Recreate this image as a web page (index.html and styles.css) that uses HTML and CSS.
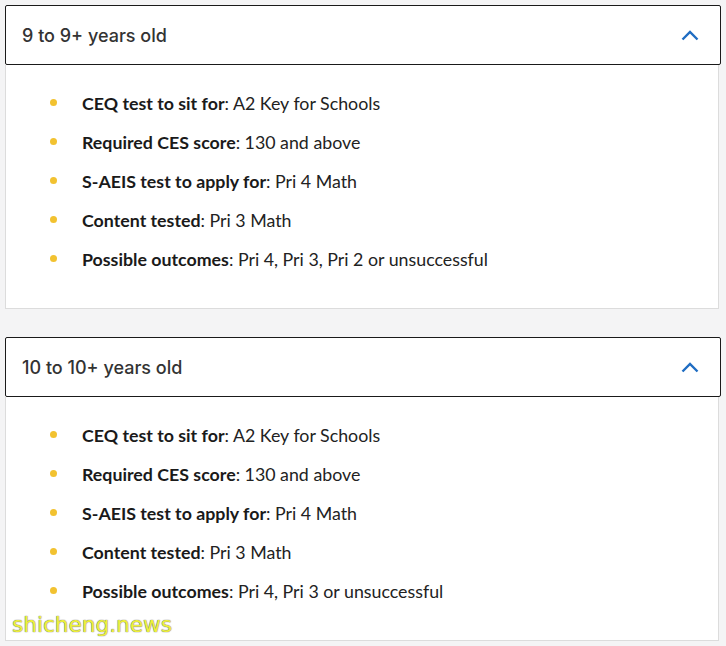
FILE: index.html
```html
<!DOCTYPE html>
<html>
<head>
<meta charset="utf-8">
<link rel="stylesheet" href="styles.css">
</head>
<body>
<div class="page">
  <section class="card">
    <div class="card-head">
      <span class="title">9 to 9+ years old</span>
      <svg class="chev" width="18" height="11" viewBox="0 0 18 11"><path d="M1.5 9.5 L9 2 L16.5 9.5" fill="none" stroke="#1f6dc2" stroke-width="2.4"/></svg>
    </div>
    <ul class="card-body">
      <li><b>CEQ test to sit for</b>: A2 Key for Schools</li>
      <li><b>Required CES score</b>: 130 and above</li>
      <li><b>S-AEIS test to apply for</b>: Pri 4 Math</li>
      <li><b>Content tested</b>: Pri 3 Math</li>
      <li><b>Possible outcomes</b>: Pri 4, Pri 3, Pri 2 or unsuccessful</li>
    </ul>
  </section>
  <section class="card">
    <div class="card-head">
      <span class="title">10 to 10+ years old</span>
      <svg class="chev" width="18" height="11" viewBox="0 0 18 11"><path d="M1.5 9.5 L9 2 L16.5 9.5" fill="none" stroke="#1f6dc2" stroke-width="2.4"/></svg>
    </div>
    <ul class="card-body">
      <li><b>CEQ test to sit for</b>: A2 Key for Schools</li>
      <li><b>Required CES score</b>: 130 and above</li>
      <li><b>S-AEIS test to apply for</b>: Pri 4 Math</li>
      <li><b>Content tested</b>: Pri 3 Math</li>
      <li><b>Possible outcomes</b>: Pri 4, Pri 3 or unsuccessful</li>
    </ul>
  </section>
</div>
<div class="watermark">shicheng.news</div>
</body>
</html>
```
FILE: styles.css
```css
html, body { margin: 0; padding: 0; }
body {
  background: #f4f4f5;
  width: 726px;
  height: 646px;
  overflow: hidden;
  position: relative;
}
.page {
  padding: 5px 5px 0 5px;
  display: flex;
  flex-direction: column;
  gap: 28px;
}
.card {
  width: 716px;
  display: flex;
  flex-direction: column;
}
.card-head {
  height: 58px;
  border: 1px solid #1a1a1a;
  border-radius: 2px;
  background: #fff;
  display: flex;
  align-items: center;
  justify-content: space-between;
  padding: 0 21px 0 16px;
}
.title {
  font-family: Inter, "Open Sans", sans-serif;
  font-weight: 500;
  font-size: 18px;
  color: #333;
}
.chev { display: block; }
.card-body {
  margin: 0;
  list-style: none;
  background: #fff;
  border: 1px solid #dcdcdc;
  border-top: none;
  width: 714px;
  padding: 18px 0 30px 44px;
  box-sizing: border-box;
  font-family: Lato, "Open Sans", sans-serif;
  font-size: 17.8px;
  color: #222;
}
.card-body li {
  display: flex;
  align-items: center;
  height: 39px;
}
.card-body li::before {
  content: "";
  width: 7px;
  height: 7px;
  border-radius: 50%;
  background: #f2c230;
  margin-right: 25px;
  flex: none;
}
.card-body b { font-weight: 700; color: #1a1a1a; }
.watermark {
  position: absolute;
  left: 12px;
  top: 612px;
  font-family: "DejaVu Sans", sans-serif;
  font-size: 21.6px;
  color: #eef03a;
  text-shadow: 0 0 1px #777, 0 0 1px #777;
}
```
